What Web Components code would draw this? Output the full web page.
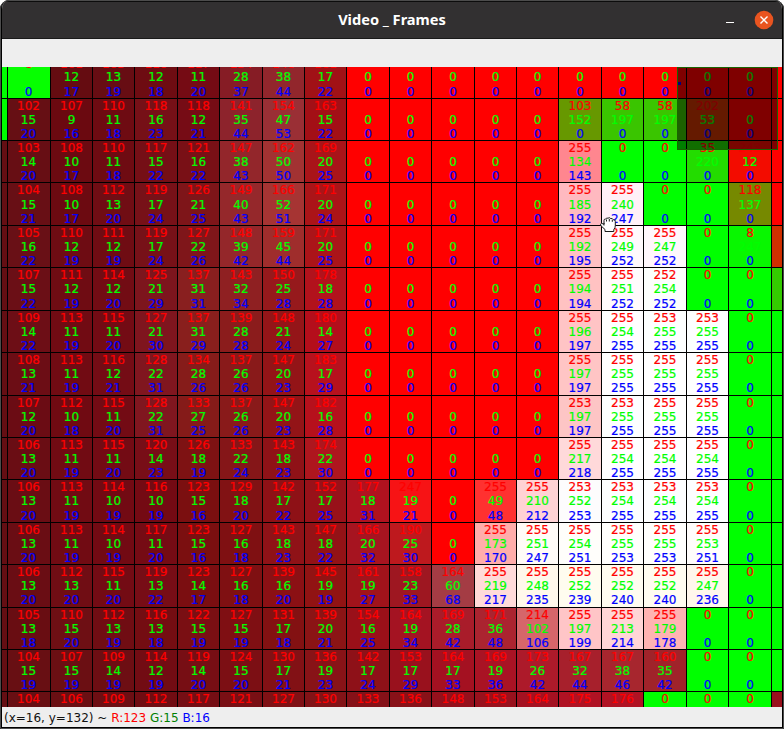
<!DOCTYPE html>
<html lang="en"><head><meta charset="utf-8"><title>Video _ Frames</title>
<style>html,body{margin:0;height:100%;background:#fff;overflow:hidden}</style></head>
<body>
<viewer-window>
  <title-bar slot="title">Video _ Frames</title-bar>
  <pixel-view></pixel-view>
  <status-line slot="status"></status-line>
</viewer-window>
<script>
class ViewerWindow extends HTMLElement{constructor(){super();this.attachShadow({mode:'open'}).innerHTML=`
<style>:host{display:grid;box-sizing:border-box;width:784px;height:729px;grid-template-rows:39px 28px 640px 20px;border:solid #000;border-width:0 2px 2px;border-radius:9px 9px 0 0;background:#eee;overflow:hidden;outline:1px solid #4c4c4c;outline-offset:-1px}
.tool{background:#eee}</style>
<slot name="title"></slot><div class="tool"></div><slot></slot><slot name="status"></slot>`}}
customElements.define('viewer-window',ViewerWindow);

class TitleBar extends HTMLElement{constructor(){super();this.attachShadow({mode:'open'}).innerHTML=`
<style>:host{display:grid;grid-template-columns:1fr auto 1fr;align-items:center;box-sizing:border-box;height:39px;padding:0 8px 1px;background:#323031;border-top:2px solid #0c0c0c;border-bottom:1px solid #1a1a1a;color:#fff;font:bold 14.6px/21px "Noto Sans",sans-serif}
.b{display:flex;justify-content:flex-end}svg{display:block}</style>
<span></span><slot></slot><div class="b"><svg width="50" height="20" viewBox="0 0 50 20"><path d="M2 12.500h8" stroke="#fff" stroke-width="1"/><circle cx="40" cy="10" r="9.300" fill="#e95420"/><path d="M36.500 6.500l7 7m0-7l-7 7" stroke="#fff" stroke-width="1.400"/></svg></div>`}}
customElements.define('title-bar',TitleBar);

// r,g,b triples; "R" pure red, "G" pure green
const DATA=[
["6,255,0","101,12,17","103,13,19","110,12,18","117,11,20","134,28,37","146,38,44","161,17,22",..."RRRRRRRRRR"],
["102,15,20","107,9,16","110,11,18","118,16,23","118,12,21","141,35,44","154,47,53","163,15,22",..."RRRRR","103,152,0","58,197,0","58,197,0","202,53,0","R"],
["103,14,20","108,10,17","110,11,18","117,15,22","121,16,22","147,38,43","162,50,50","169,20,25",..."RRRRR","255,134,143","G","G","35,220,0","243,12,0"],
["104,15,21","108,10,17","112,13,20","119,17,24","126,21,25","149,40,43","166,52,51","171,20,24",..."RRRRR","255,185,192","255,240,247","G","G","118,137,0"],
["105,16,22","110,12,19","111,12,19","119,17,24","127,22,26","148,39,42","159,45,44","171,20,25",..."RRRRR","255,192,195","255,249,252","255,247,252","G","8,247,0"],
["107,15,22","111,12,19","114,12,20","125,21,29","137,31,31","143,32,34","150,25,28","178,18,28",..."RRRRR","255,194,194","255,251,252","252,254,252","G","G"],
["109,14,22","113,11,19","115,11,20","127,21,30","137,31,29","139,28,28","148,21,24","180,14,27",..."RRRRR","255,196,197","255,254,255","253,255,255","253,255,255","G"],
["108,13,21","113,11,19","116,12,21","128,22,31","134,28,26","137,26,26","147,20,23","183,17,29",..."RRRRR","255,197,197","255,255,255","255,255,255","255,255,255","G"],
["107,12,20","112,10,18","115,11,20","128,22,31","133,27,25","137,26,26","147,20,23","182,16,28",..."RRRRR","253,197,197","253,255,255","255,255,255","255,255,255","G"],
["106,13,20","113,11,19","115,11,20","120,14,23","126,18,19","133,22,24","143,18,23","174,22,30",..."RRRRR","255,217,218","255,254,255","255,254,255","255,254,255","G"],
["106,13,20","113,11,19","114,10,19","116,10,19","123,15,16","129,18,20","142,17,22","152,17,25","177,18,31","247,19,21","R","255,49,48","255,210,212","253,252,253","253,254,255","253,254,255","253,254,255","G"],
["106,13,20","113,11,19","114,10,19","117,11,20","123,15,16","127,16,18","143,18,23","147,18,22","166,20,32","190,25,30","R","255,173,170","255,251,247","255,254,251","255,255,253","255,255,253","255,253,251","G"],
["106,13,20","112,13,20","115,11,20","119,13,22","123,14,17","127,16,18","139,16,20","145,19,19","161,19,27","158,23,33","164,60,68","255,219,217","255,248,235","255,252,239","255,252,240","255,252,240","255,247,236","G"],
["105,13,18","110,15,20","112,13,19","116,13,18","122,15,19","127,15,19","131,17,18","139,20,21","154,16,25","164,19,34","169,28,42","171,36,48","214,102,106","255,197,199","255,213,214","255,179,178","G","G"],
["104,15,19","107,15,19","109,14,19","114,12,19","119,14,20","124,15,20","130,17,21","136,19,23","142,17,24","153,17,29","164,17,33","169,19,36","173,26,42","167,32,44","167,38,46","160,35,42","G","G"],
["104,15,19","106,15,19","109,14,19","112,12,18","117,14,20","121,15,20","127,17,21","130,19,23","133,17,24","136,17,24","148,16,28","153,17,29","164,17,33","175,18,35","176,18,35","G","G","G"]];
const LEFT=["0,255,0","0,255,0",...Array(14).fill("100,14,19")];
const RIGHT=["255,0,0","255,0,0","255,0,0","255,0,0","208,47,0","52,203,0",...Array(9).fill("0,255,0"),"153,17,29"];
// column and row edges of the zoomed pixels
const XS=[2,8,51,93,135,178,220,263,305,347,390,432,475,517,559,602,644,687,729,772,782];
const YS=[56,99,141,183,226,268,311,353,396,438,480,523,565,608,650,692,734];
// label line heights of each row
const G=[[14,15],[14,14],[14,14],[15,14],[14,14],[14,15],[14,14],[14,14],[14,14],[14,14],[14,15],[14,14],[14,14],[14,14],[14,14],[14,14]];

class PixelCell extends HTMLElement{constructor(){super();this.attachShadow({mode:'open'}).innerHTML=`
<style>:host{display:grid;grid-template-rows:var(--t,14px) var(--a) var(--b);align-content:start;justify-items:center;overflow:hidden;background:rgb(var(--c));font:12px/14px "DejaVu Sans",sans-serif;-webkit-text-stroke:.2px;border:solid #000;border-width:0 1px 1px 0;box-sizing:border-box}
span{align-self:end}.r{color:#f00}.g{color:#0f0}.b{color:#00f}</style><span class="r"></span><span class="g"></span><span class="b"></span>`}
connectedCallback(){const c=this.getAttribute('rgb'),v=c.split(',');this.style.setProperty('--c',c);
 if(this.hasAttribute('bare'))return;
 // a channel label that would be the same colour as its cell is left blank
 if(c=='255,0,0')v[0]='';if(v[1]=='255'&&+v[0]<10&&v[2]=='0')v[1]='';
 this.shadowRoot.querySelectorAll('span').forEach((s,i)=>s.textContent=v[i]);}}
customElements.define('pixel-cell',PixelCell);

class PixelView extends HTMLElement{constructor(){super();
const full=s=>s=='R'?'255,0,0':s=='G'?'0,255,0':s;
const diff=a=>a.slice(1).map((v,i)=>v-a[i]+'px').join(' ');
let cells='';DATA.forEach((row,y)=>{const t=y?14:15;
cells+=`<pixel-cell bare rgb="${LEFT[y]}"></pixel-cell>`+row.map((c,x)=>`<pixel-cell style="--t:${t}px;--a:${G[y][0]+14-t}px;--b:${G[y][1]}px;padding-right:${x?0:1}px" rgb="${full(c)}"></pixel-cell>`).join('')+`<pixel-cell bare class="last" rgb="${RIGHT[y]}"></pixel-cell>`});
this.attachShadow({mode:'open'}).innerHTML=`
<style>:host{display:block;position:relative;overflow:hidden;height:640px}
.grid{display:grid;margin-top:-11px;grid-template-columns:${diff(XS)};grid-template-rows:${diff(YS)}}
.map{position:absolute;left:675px;top:0;width:101px;height:83px;box-sizing:border-box;border:1px solid #1a6400;background:#00000080}
.map i{position:absolute;left:0;top:14px;width:3px;height:3px;background:#000080}
svg{position:absolute;left:597px;top:149px}.last{border-right-width:0}</style>
<div class="grid">${cells}</div><div class="map"><i></i></div>
<svg width="19" height="19" viewBox="0 0 19 19"><path d="M5 8V4.500Q5 2.800 6.500 3.200Q7.300 1.500 9 2.200Q10.500 1 11.800 2.600Q13.500 2 14.200 3.700Q16.300 3.500 16.300 5.500V9.500Q16.300 12 14.800 13.500V15.500H6V13.500L2 9.800Q.8 7.800 2.500 7.300L5 8.300" fill="#fff" stroke="#1a1a1a"/><path d="M7.500 3.500V5.500M10.300 3V5.500M13.300 3.800V5.800M5 7V9.500" stroke="#1a1a1a" fill="none"/></svg>`}}
customElements.define('pixel-view',PixelView);

class StatusLine extends HTMLElement{constructor(){super();this.attachShadow({mode:'open'}).innerHTML=`
<style>:host{display:block;box-sizing:border-box;height:20px;padding:3px 2px 0;font:12px/16px "DejaVu Sans",sans-serif;color:#111;background:#eee;white-space:nowrap}
.r{color:#f00}.g{color:#008000}.b{color:#00f}</style>(x=16, y=132) ~ <span class="r">R:123</span> <span class="g">G:15</span> <span class="b">B:16</span>`}}
customElements.define('status-line',StatusLine);
</script></body></html>
